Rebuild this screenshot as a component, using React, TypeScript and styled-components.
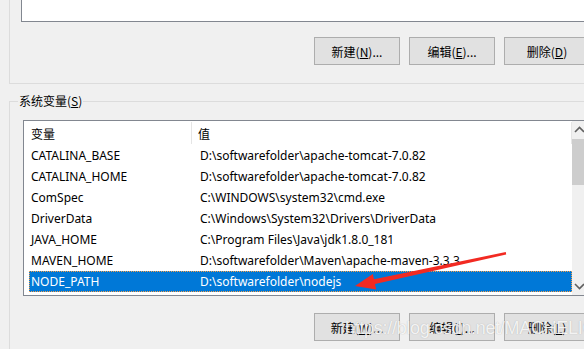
import React from 'react';
import styled, { createGlobalStyle } from 'styled-components';

const GlobalStyle = createGlobalStyle`
  html, body {
    margin: 0;
    padding: 0;
    background: #f0f0f0;
    overflow: hidden;
  }
  body {
    font-family: 'Noto Sans', 'Noto Sans CJK SC', sans-serif;
    font-size: 12px;
    color: #000;
  }
`;

const Page = styled.div`
  position: relative;
  width: 584px;
  height: 349px;
  overflow: hidden;
  padding-left: 9px;
  box-sizing: border-box;
`;

const TopGroup = styled.div`
  width: 640px;
  height: 84px;
  box-sizing: border-box;
  border-left: 1px solid #dcdcdc;
  border-bottom: 1px solid #dcdcdc;
  padding-left: 11px;
`;

const TopList = styled.div`
  height: 22px;
  box-sizing: border-box;
  background: #fff;
  border-left: 1px solid #828790;
  border-bottom: 1px solid #828790;
`;

const ButtonRow = styled.div<{ $top: number; $left: number }>`
  display: flex;
  gap: 9px;
  margin-top: ${(p) => p.$top}px;
  padding-left: ${(p) => p.$left}px;
`;

const Button = styled.button`
  width: 86px;
  height: 28px;
  flex: none;
  box-sizing: border-box;
  background: #e1e1e1;
  border: 1px solid #adadad;
  border-radius: 0;
  padding: 0;
  font-family: 'Noto Sans CJK SC', 'Noto Sans', sans-serif;
  font-size: 12px;
  color: #000;
  u {
    text-decoration-thickness: 1px;
    text-underline-offset: 1px;
  }
`;

const Group = styled.fieldset`
  margin: 9px 0 0 0;
  padding: 0 0 0 13px;
  width: 640px;
  height: 400px;
  box-sizing: border-box;
  border: 1px solid #dcdcdc;
  legend {
    margin-left: -5px;
    padding: 0 1px;
    font-family: 'Noto Sans CJK SC', sans-serif;
    font-size: 12px;
    line-height: 16px;
  }
`;

const ListBox = styled.div`
  margin-top: 11px;
  width: 567px;
  height: 176px;
  box-sizing: border-box;
  background: #fff;
  border: 1px solid #828790;
  display: flex;
`;

const ListBody = styled.div`
  flex: 1;
  display: flex;
  flex-direction: column;
`;

const Header = styled.div`
  display: flex;
  height: 24px;
  align-items: stretch;
  padding-top: 1px;
  box-sizing: border-box;
`;

const HeaderCell = styled.div<{ $w?: number }>`
  ${(p) => (p.$w ? `width: ${p.$w}px; flex: none;` : 'flex: 1;')}
  display: flex;
  align-items: center;
  padding-left: ${(p) => (p.$w ? 7 : 6)}px;
  box-sizing: border-box;
  border-right: 1px solid #e5e5e5;
  font-family: 'Noto Sans CJK SC', sans-serif;
  margin-bottom: 1px;
`;

const Row = styled.div<{ $selected?: boolean }>`
  display: flex;
  align-items: center;
  height: 21px;
  margin-left: 5px;
  box-sizing: border-box;
  background: ${(p) => (p.$selected ? '#0078d7' : 'transparent')};
  color: ${(p) => (p.$selected ? '#fff' : '#000')};
  outline: ${(p) => (p.$selected ? '1px dotted #f7a048' : 'none')};
  outline-offset: -1px;
`;

const NameCell = styled.div`
  width: 163px;
  flex: none;
  padding-left: 2px;
  box-sizing: border-box;
  white-space: nowrap;
`;

const ValueCell = styled.div`
  padding-left: 8px;
  white-space: nowrap;
`;

const ScrollBar = styled.div`
  width: 17px;
  flex: none;
  background: #f0f0f0;
  display: flex;
  flex-direction: column;
`;

const ScrollArrow = styled.div`
  height: 17px;
  display: flex;
  align-items: center;
  padding-left: 2px;
`;

const ScrollTrack = styled.div`
  flex: 1;
`;

const ScrollThumb = styled.div`
  height: 46px;
  margin-top: 1px;
  background: #cdcdcd;
`;

const Overlay = styled.svg`
  position: absolute;
  left: 0;
  top: 0;
  pointer-events: none;
`;

const Watermark = styled.div`
  position: absolute;
  left: 345px;
  top: 318px;
  font-family: 'Liberation Sans', Arial, sans-serif;
  font-size: 18px;
  letter-spacing: -0.3px;
  color: rgba(255, 255, 255, 0.85);
  text-shadow: 0 0 1px rgba(120, 120, 120, 0.5);
  white-space: nowrap;
  pointer-events: none;
`;

const rows = [
  ['CATALINA_BASE', 'D:\\softwarefolder\\apache-tomcat-7.0.82'],
  ['CATALINA_HOME', 'D:\\softwarefolder\\apache-tomcat-7.0.82'],
  ['ComSpec', 'C:\\WINDOWS\\system32\\cmd.exe'],
  ['DriverData', 'C:\\Windows\\System32\\Drivers\\DriverData'],
  ['JAVA_HOME', 'C:\\Program Files\\Java\\jdk1.8.0_181'],
  ['MAVEN_HOME', 'D:\\softwarefolder\\Maven\\apache-maven-3.3.3'],
  ['NODE_PATH', 'D:\\softwarefolder\\nodejs'],
];

const Chevron = ({ up }: { up?: boolean }) => (
  <svg width="11" height="7" viewBox="0 0 11 7">
    <path
      d={up ? 'M1 6 L5.5 1.5 L10 6' : 'M1 1 L5.5 5.5 L10 1'}
      fill="none"
      stroke="#606060"
      strokeWidth="1.6"
    />
  </svg>
);

const App = () => (
  <>
    <GlobalStyle />
    <Page>
      <TopGroup>
        <TopList />
        <ButtonRow $top={15} $left={314 - 21}>
          <Button>新建(<u>N</u>)...</Button>
          <Button>编辑(<u>E</u>)...</Button>
          <Button>删除(<u>D</u>)</Button>
        </ButtonRow>
      </TopGroup>
      <Group>
        <legend>系统变量(<u>S</u>)</legend>
        <ListBox>
          <ListBody>
            <Header>
              <HeaderCell $w={168}>变量</HeaderCell>
              <HeaderCell>值</HeaderCell>
            </Header>
            {rows.map(([name, value], i) => (
              <Row key={name} $selected={i === rows.length - 1}>
                <NameCell>{name}</NameCell>
                <ValueCell>{value}</ValueCell>
              </Row>
            ))}
          </ListBody>
          <ScrollBar>
            <ScrollArrow>
              <Chevron up />
            </ScrollArrow>
            <ScrollTrack>
              <ScrollThumb />
            </ScrollTrack>
            <ScrollArrow>
              <Chevron />
            </ScrollArrow>
          </ScrollBar>
        </ListBox>
        <ButtonRow $top={17} $left={314 - 23}>
          <Button>新建(<u>W</u>)...</Button>
          <Button>编辑(<u>I</u>)...</Button>
          <Button>删除(<u>L</u>)</Button>
        </ButtonRow>
      </Group>
      <Overlay width="584" height="349">
        <polygon
          points="505.8,252 374,279.3 372.8,273.9 355,286 376.2,289.5 375,284.1 506.2,254.4"
          fill="#f22a22"
        />
      </Overlay>
      <Watermark>https://blog.csdn.net/MACHELIC</Watermark>
    </Page>
  </>
);

export default App;
